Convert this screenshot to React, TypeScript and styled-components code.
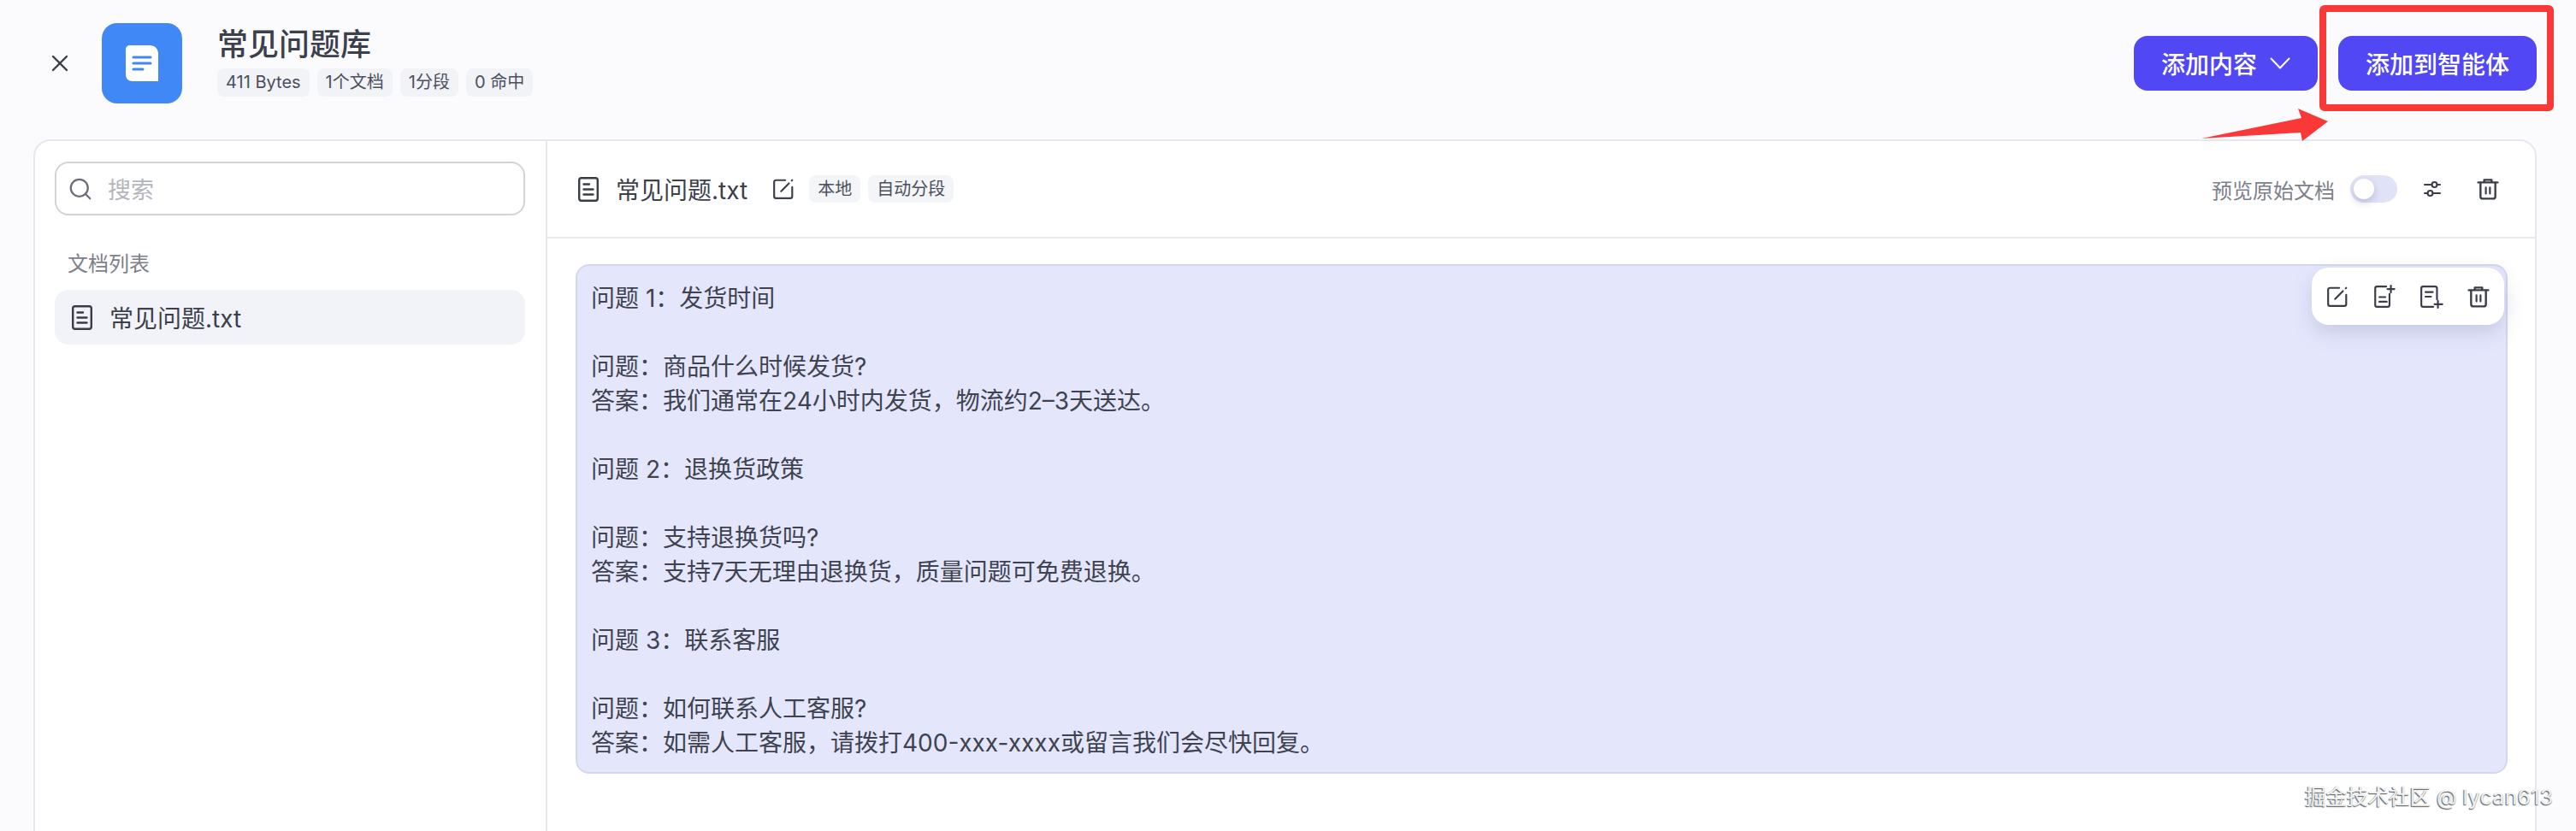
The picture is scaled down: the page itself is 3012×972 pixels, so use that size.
import styled, { createGlobalStyle } from "styled-components";
import { Search, X } from "lucide-react";

const GlobalStyle = createGlobalStyle`
  html, body {
    margin: 0;
    padding: 0;
    background: #fbfbfe;
    font-family: Inter, "Noto Sans CJK SC", "Noto Sans", sans-serif;
    color: #3c404c;
  }
  * { box-sizing: border-box; }
`;

const Page = styled.div`
  position: relative;
  width: 3012px;
  height: 972px;
  overflow: hidden;
  padding: 0 46px 0 39px;
`;

const Header = styled.header`
  height: 163px;
  display: flex;
  align-items: flex-start;
  padding-top: 27px;
`;

const CloseButton = styled.button`
  width: 32px;
  height: 32px;
  margin: 31px 33px 0 15px;
  padding: 0;
  border: 0;
  background: none;
  color: #3a3d48;
  display: flex;
  align-items: center;
  justify-content: center;
`;

const BlueTile = styled.div`
  width: 94px;
  height: 94px;
  border-radius: 18px;
  background: #4088f5;
  display: flex;
  align-items: center;
  justify-content: center;
`;

const TitleBlock = styled.div`
  margin-left: 41px;
  display: flex;
  flex-direction: column;
  gap: 3px;
`;

const Title = styled.h1`
  margin: 0;
  font-size: 36px;
  line-height: 50px;
  font-weight: 500;
  color: #3c404c;
`;

const TagRow = styled.div`
  display: flex;
  gap: 9px;
`;

const Tag = styled.span`
  height: 33px;
  padding: 0 10px;
  border-radius: 8px;
  background: #f1f3f7;
  color: #4c505c;
  font-size: 20px;
  line-height: 33px;
  white-space: nowrap;
`;

const Actions = styled.div`
  margin-left: auto;
  margin-top: 15px;
  display: flex;
  gap: 24px;
`;

const PrimaryButton = styled.button`
  height: 64px;
  padding: 0 32px;
  border: 0;
  border-radius: 16px;
  background: #5147f5;
  color: #fff;
  font-family: inherit;
  font-size: 28px;
  font-weight: 500;
  display: flex;
  align-items: center;
  gap: 15px;
`;

const Panel = styled.section`
  height: 860px;
  display: flex;
  background: #fff;
  border: 2px solid #e7e8ee;
  border-radius: 20px;
`;

const Sidebar = styled.aside`
  width: 599px;
  flex: none;
  padding: 24px 24px 24px 23px;
  border-right: 2px solid #e7e8ee;
`;

const SearchBox = styled.div`
  height: 63px;
  padding: 0 13px;
  border: 2px solid #d2d3d8;
  border-radius: 16px;
  display: flex;
  align-items: center;
  gap: 17px;
  color: #6b6e78;
`;

const Placeholder = styled.span`
  font-size: 27px;
  color: #b4b6bd;
`;

const SectionLabel = styled.div`
  margin: 40px 0 13px 15px;
  font-size: 24px;
  line-height: 34px;
  color: #7d808a;
`;

const FileItem = styled.div`
  height: 64px;
  padding: 0 20px;
  border-radius: 16px;
  background: #f1f3f8;
  display: flex;
  align-items: center;
  gap: 20px;
  font-size: 28px;
`;

const Main = styled.main`
  flex: 1;
  min-width: 0;
`;

const MainHeader = styled.div`
  height: 114px;
  padding: 0 42px 0 36px;
  border-bottom: 2px solid #e9eaef;
  display: flex;
  align-items: center;
`;

const FileName = styled.span`
  margin-left: 20px;
  font-size: 28px;
  color: #3c404c;
`;

const EditSlot = styled.span`
  margin: 0 17px 0 29px;
  display: flex;
`;

const SmallTag = styled(Tag)`
  height: 32px;
  line-height: 32px;
  background: #f3f5f8;
  & + & { margin-left: 9px; }
`;

const HeaderRight = styled.div`
  margin-left: auto;
  display: flex;
  align-items: center;
`;

const PreviewLabel = styled.span`
  font-size: 24px;
  color: #7d808a;
`;

const Switch = styled.span`
  width: 55px;
  height: 32px;
  margin: 0 31px 0 18px;
  padding: 4px;
  border-radius: 16px;
  background: #e0e2f8;
  display: flex;
`;

const Knob = styled.span`
  width: 24px;
  height: 24px;
  border-radius: 50%;
  background: #fff;
  box-shadow: 0 4px 8px rgba(60, 60, 90, 0.22);
`;

const HeaderIcon = styled.span`
  display: flex;
  color: #3a3d48;
  & + & { margin-left: 42px; }
`;

const Content = styled.div`
  padding: 30px 32px 0 33px;
`;

const Chunk = styled.div`
  position: relative;
  height: 596px;
  padding: 18px 17px 16px 16px;
  border: 2px solid #d4d7f0;
  border-radius: 16px;
  background: #e4e7fc;
  font-size: 28px;
  line-height: 40px;
  color: #3f4350;
  white-space: pre-wrap;
`;

const ChunkToolbar = styled.div`
  position: absolute;
  top: 2px;
  right: 2px;
  width: 225px;
  height: 67px;
  padding: 0 17px;
  border-radius: 20px;
  background: #fff;
  box-shadow: 0 10px 24px rgba(70, 70, 120, 0.18);
  display: flex;
  align-items: center;
  justify-content: space-between;
  color: #3a3d48;
`;

const RedBox = styled.div`
  position: absolute;
  left: 2712px;
  top: 6px;
  width: 274px;
  height: 124px;
  border: 8px solid #f93838;
  border-radius: 6px;
`;

const ArrowMark = styled.svg`
  position: absolute;
  left: 2570px;
  top: 122px;
`;

const Watermark = styled.div`
  position: absolute;
  left: 2695px;
  top: 914px;
  font-size: 24.5px;
  line-height: 36px;
  color: #f2f2f2;
  text-shadow: -1px 1px 1px #666, 0 1px 1px #888;
  white-space: nowrap;
`;

const WatermarkName = styled.span`
  letter-spacing: 0.5px;
`;

const Glyph = styled.svg`
  flex: none;
  fill: none;
  stroke: currentColor;
  stroke-width: 2;
  stroke-linecap: round;
  stroke-linejoin: round;
`;

function DocIcon() {
  return (
    <Glyph width="24" height="29" viewBox="0 0 24 29" style={{ color: "#3a3d48" }}>
      <rect x="1.2" y="1.2" width="21.6" height="26.6" rx="2.5" strokeWidth="2.4" />
      <path d="M6.5 8.5h6.5M6.5 14.5h11M6.5 20.5h11" strokeWidth="2.4" />
    </Glyph>
  );
}

function EditIcon({ size = 26 }: { size?: number }) {
  return (
    <Glyph width={size} height={size} viewBox="0 0 24 24">
      <path d="M14 2.5H4a2 2 0 0 0-2 2v15.500a2 2 0 0 0 2 2h15.500a2 2 0 0 0 2-2V10" />
      <path d="M9.500 14.500 18 6M21 3l.5-.5" />
    </Glyph>
  );
}

function InsertBeforeIcon() {
  return (
    <Glyph width="28" height="28" viewBox="0 0 26 26">
      <path d="M15 2H5a2 2 0 0 0-2 2v18a2 2 0 0 0 2 2h11.500a2 2 0 0 0 2-2V10" />
      <path d="M7.500 13.500h6.500M7.500 18.500h8" />
      <path d="M20 1v7.500M16.300 4.700h7.500" />
    </Glyph>
  );
}

function InsertAfterIcon() {
  return (
    <Glyph width="28" height="28" viewBox="0 0 26 26">
      <path d="M15 24H4a2 2 0 0 1-2-2V4a2 2 0 0 1 2-2h13a2 2 0 0 1 2 2v12" />
      <path d="M6.500 8h8M6.500 13h6" />
      <path d="M20 17.500V25M16.300 21.200h8.500" />
    </Glyph>
  );
}

function TrashIcon() {
  return (
    <Glyph width="26" height="26" viewBox="0 0 24 24">
      <path d="M1.500 5h21M8 4.500V2.200h8v2.300" strokeWidth="2.200" />
      <path d="M4 5.500V20a2.500 2.500 0 0 0 2.500 2.500h11A2.500 2.500 0 0 0 20 20V5.500" strokeWidth="2.200" />
      <path d="M9.800 10.500v6.500M14.200 10.500v6.500" />
    </Glyph>
  );
}

function TuneIcon() {
  return (
    <Glyph width="20" height="24" viewBox="0 0 20 24">
      <path d="M1 7h8.500M15.500 7H19M10.500 17H19M1 17h3.500" />
      <circle cx="12.500" cy="7" r="3" />
      <circle cx="7.500" cy="17" r="3" />
    </Glyph>
  );
}

function CaretIcon() {
  return (
    <Glyph width="24" height="16" viewBox="0 0 24 16">
      <path d="M1.500 2.500 12 13.500 22.500 2.500" />
    </Glyph>
  );
}

const lines = [
  "问题 1：发货时间",
  "",
  "问题：商品什么时候发货?",
  "答案：我们通常在24小时内发货，物流约2–3天送达。",
  "",
  "问题 2：退换货政策",
  "",
  "问题：支持退换货吗?",
  "答案：支持7天无理由退换货，质量问题可免费退换。",
  "",
  "问题 3：联系客服",
  "",
  "问题：如何联系人工客服?",
  "答案：如需人工客服，请拨打400-xxx-xxxx或留言我们会尽快回复。",
];

export default function App() {
  return (
    <Page>
      <GlobalStyle />
      <Header>
        <CloseButton aria-label="关闭">
          <X size={34} strokeWidth={1.8} />
        </CloseButton>
        <BlueTile>
          <svg width="38" height="42" viewBox="0 0 38 42">
            <path d="M5 0h23c6 0 10 4 10 10v32H8c-5 0-8-3-8-8V5c0-3 2-5 5-5z" fill="#fff" />
            <path d="M9 14h20M9 21h20M9 28h11" stroke="#4088f5" strokeWidth="3" strokeLinecap="round" />
          </svg>
        </BlueTile>
        <TitleBlock>
          <Title>常见问题库</Title>
          <TagRow>
            <Tag>411 Bytes</Tag>
            <Tag>1个文档</Tag>
            <Tag>1分段</Tag>
            <Tag>0 命中</Tag>
          </TagRow>
        </TitleBlock>
        <Actions>
          <PrimaryButton>
            添加内容
            <CaretIcon />
          </PrimaryButton>
          <PrimaryButton>添加到智能体</PrimaryButton>
        </Actions>
      </Header>

      <Panel>
        <Sidebar>
          <SearchBox>
            <Search size={30} strokeWidth={1.8} />
            <Placeholder>搜索</Placeholder>
          </SearchBox>
          <SectionLabel>文档列表</SectionLabel>
          <FileItem>
            <DocIcon />
            常见问题.txt
          </FileItem>
        </Sidebar>

        <Main>
          <MainHeader>
            <DocIcon />
            <FileName>常见问题.txt</FileName>
            <EditSlot>
              <EditIcon />
            </EditSlot>
            <SmallTag>本地</SmallTag>
            <SmallTag>自动分段</SmallTag>
            <HeaderRight>
              <PreviewLabel>预览原始文档</PreviewLabel>
              <Switch>
                <Knob />
              </Switch>
              <HeaderIcon>
                <TuneIcon />
              </HeaderIcon>
              <HeaderIcon>
                <TrashIcon />
              </HeaderIcon>
            </HeaderRight>
          </MainHeader>
          <Content>
            <Chunk>
              {lines.join("\n")}
              <ChunkToolbar>
                <EditIcon />
                <InsertBeforeIcon />
                <InsertAfterIcon />
                <TrashIcon />
              </ChunkToolbar>
            </Chunk>
          </Content>
        </Main>
      </Panel>

      <RedBox />
      <ArrowMark width="160" height="50" viewBox="2570 122 160 50">
        <path d="M2574 162 2691 138 2687 127 2722 142 2692 165 2690 155Z" fill="#f93838" />
      </ArrowMark>
      <Watermark>
        掘金技术社区 @ <WatermarkName>lycan613</WatermarkName>
      </Watermark>
    </Page>
  );
}
